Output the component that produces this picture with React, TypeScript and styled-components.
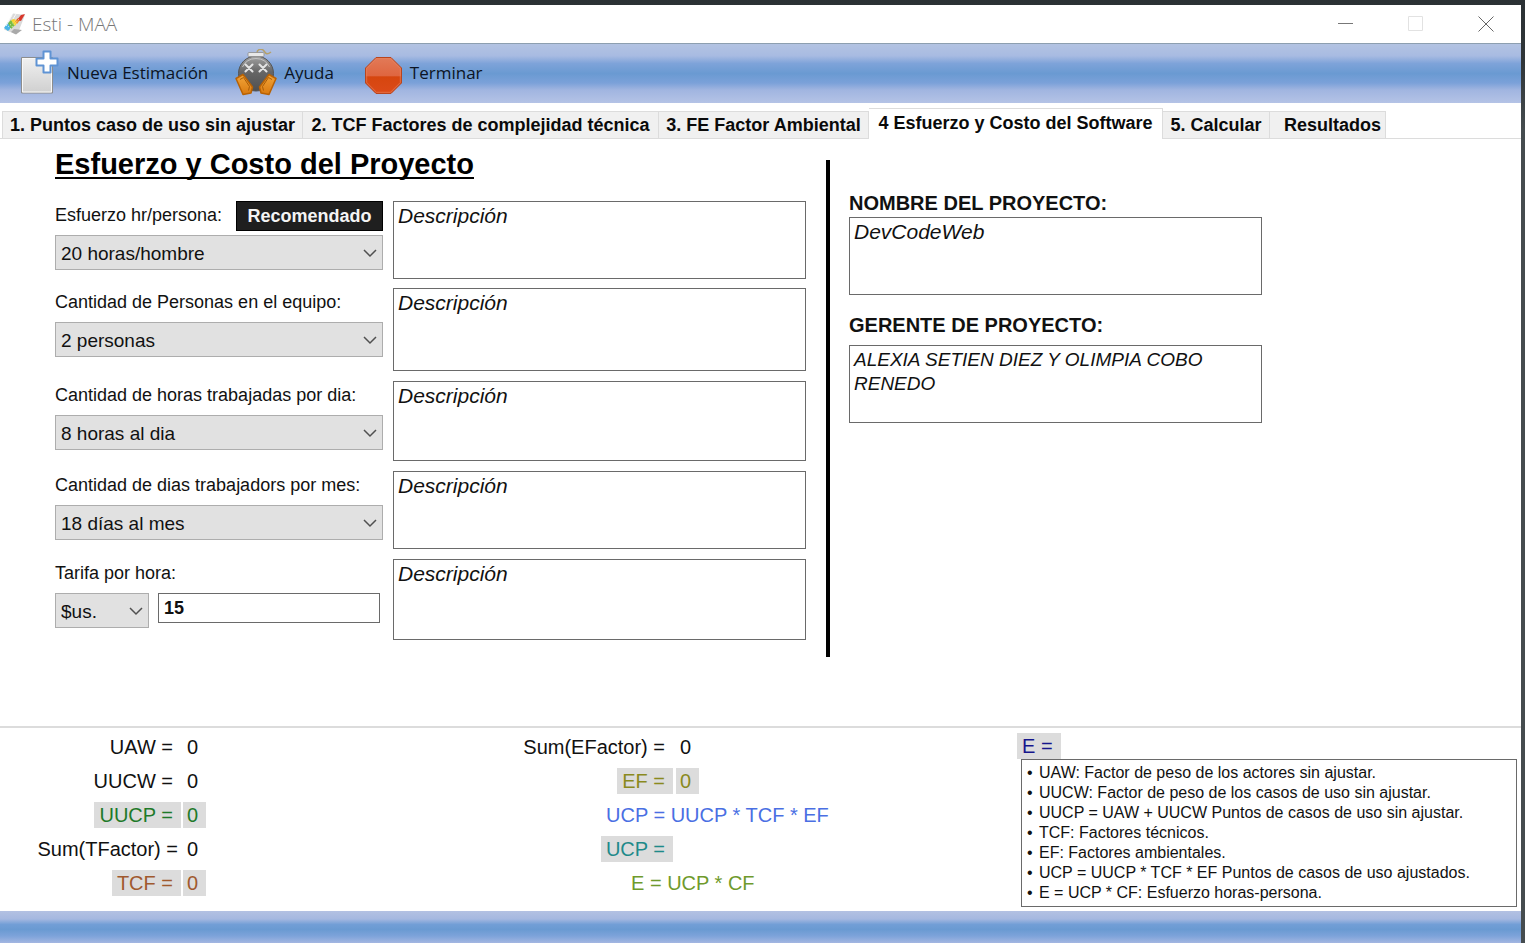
import React from "react";
import styled, { createGlobalStyle, css } from "styled-components";

const sans = `"Liberation Sans", Arial, sans-serif`;
const uiSans = `"Open Sans", "Noto Sans", sans-serif`;

const GlobalStyle = createGlobalStyle`
  *, *::before, *::after { box-sizing: border-box; }
  body { margin: 0; background: #2d3336; font-family: ${sans}; color: #111; }
  button, input, select, textarea { font-family: inherit; color: inherit; margin: 0; border-radius: 0; }
`;

const Desktop = styled.div`
  min-height: 100vh;
  display: flex;
  padding: 5px 4px 0 0;
  background: linear-gradient(#2b3134, #2f3538 60px, #454c4f 130px, #454c4f);
`;

const Window = styled.div`
  flex: 1;
  min-width: 0;
  display: flex;
  flex-direction: column;
  background: #fff;
`;

const TitleBar = styled.header`
  display: flex;
  align-items: center;
  height: 39px;
  padding-left: 3px;
  border-bottom: 1px solid #8d9fb0;
`;

const Title = styled.h1`
  flex: 1;
  margin: 0 0 0 5px;
  font: 300 19px/24px ${uiSans};
  color: #777;
`;

const WindowButton = styled.button`
  display: grid;
  place-items: center;
  width: 70px;
  height: 38px;
  padding: 0;
  border: 0;
  background: none;
`;

const Toolbar = styled.nav`
  display: flex;
  align-items: center;
  gap: 27px;
  height: 59px;
  padding: 0 0 1px 18px;
  background: linear-gradient(#b3c3e2, #a8bbe2 20%, #7ea3d9 33%, #6a9ad2 50%, #7ba1d9 66%, #a1b5e0 78%, #b4c3e6);
`;

const ToolButton = styled.button`
  display: flex;
  align-items: center;
  gap: 7px;
  padding: 0;
  border: 0;
  background: none;
  font: 17px/24px ${uiSans};
  color: #0c1424;
`;

const TabStrip = styled.div`
  display: flex;
  align-items: flex-end;
  height: 36px;
  padding-left: 2px;
  border-bottom: 1px solid #dcdcdc;
`;

const Tab = styled.button<{ $width: number; $active?: boolean; $inset?: number }>`
  width: ${(p) => p.$width}px;
  height: 27px;
  padding: 0 0 0 ${(p) => p.$inset ?? 0}px;
  border: 1px solid #dcdcdc;
  border-left-width: 0;
  border-bottom: 0;
  background: #f0f0f0;
  font-size: 18px;
  font-weight: 700;
  line-height: 24px;
  white-space: nowrap;
  color: #0a0a0a;
  &:first-child { border-left-width: 1px; }
  ${(p) =>
    p.$active &&
    css`
      height: 31px;
      margin-bottom: -1px;
      padding-bottom: 3px;
      background: #fff;
    `}
`;

const Page = styled.main`
  flex: 1;
  display: grid;
  grid-template-columns: minmax(0, 751fr) 4px minmax(0, 691fr);
  align-content: start;
  padding: 10px 0 20px 55px;
`;

const FormSection = styled.section`
  padding-bottom: 17px;
`;

const Heading = styled.h2`
  margin: 0 0 22px;
  font-size: 29px;
  line-height: 30px;
  color: #000;
  text-decoration: underline;
  text-decoration-thickness: 2px;
  text-underline-offset: 3px;
  text-decoration-skip-ink: none;
`;

const FormGrid = styled.div`
  display: grid;
  grid-template-columns: minmax(0, 328fr) minmax(0, 413fr);
  grid-template-rows: 77px 83px 80px 78px 81px;
  gap: 10px;
`;

const Field = styled.div`
  min-width: 0;
`;

const FieldHead = styled.div`
  display: flex;
  justify-content: space-between;
  height: 34px;
`;

const Label = styled.label`
  font-size: 18px;
  line-height: 28px;
  white-space: nowrap;
`;

const RecommendButton = styled.button`
  width: 147px;
  height: 30px;
  padding: 0;
  border: 1px solid #000;
  background: #1f1f1f;
  color: #f4f4f4;
  font-size: 18px;
  font-weight: 700;
`;

const SelectBox = styled.div<{ $width?: number }>`
  position: relative;
  width: ${(p) => (p.$width ? `${p.$width}px` : "100%")};
  svg {
    position: absolute;
    right: 6px;
    top: 14px;
    pointer-events: none;
  }
`;

const Select = styled.select`
  display: block;
  width: 100%;
  height: 35px;
  padding: 2px 20px 0 5px;
  border: 1px solid #adadad;
  background: #e1e1e1;
  appearance: none;
  font-size: 19px;
`;

const RateRow = styled.div`
  display: flex;
  align-items: flex-start;
  gap: 9px;
  padding-right: 3px;
`;

const RateInput = styled.input`
  flex: 1;
  min-width: 0;
  height: 30px;
  padding: 0 5px;
  border: 1px solid #6a6a6a;
  background: #fff;
  font-size: 18px;
  font-weight: 700;
`;

const Notes = styled.textarea<{ $size?: number }>`
  display: block;
  width: 100%;
  height: 100%;
  min-height: 78px;
  padding: 2px 4px;
  border: 1px solid #6a6a6a;
  background: #fff;
  resize: none;
  overflow: hidden;
  font-size: ${(p) => p.$size ?? 21}px;
  font-style: italic;
  line-height: 24px;
`;

const Divider = styled.div`
  margin-top: 11px;
  background: #000;
`;

const ProjectSection = styled.section`
  display: grid;
  grid-template-columns: minmax(0, 413fr) minmax(0, 259fr);
  align-content: start;
  gap: 18px 0;
  padding: 42px 0 0 19px;
`;

const ProjectField = styled.div<{ $gap: number }>`
  grid-column: 1;
  display: flex;
  flex-direction: column;
  gap: ${(p) => p.$gap}px;
`;

const ProjectLabel = styled.label`
  font-size: 20px;
  font-weight: 700;
  line-height: 24px;
  white-space: nowrap;
`;

const Summary = styled.footer`
  display: grid;
  grid-template-columns: minmax(0, 515fr) minmax(0, 502fr) minmax(0, 500fr);
  padding-right: 4px;
  border-top: 2px solid #dcdcdc;
  background: #fff;
  font-size: 20px;
`;

const Totals = styled.div<{ $label: number; $gap: number }>`
  display: grid;
  grid-template-columns: ${(p) => p.$label}px auto;
  grid-template-rows: repeat(5, 34px);
  column-gap: ${(p) => p.$gap}px;
  align-items: center;
  justify-content: start;
  padding: 2px 0 11px;
`;

const Tag = styled.span<{ $tone?: string; $tight?: boolean }>`
  justify-self: end;
  padding: 0 ${(p) => (p.$tight ? 3 : 8)}px 0 5px;
  line-height: 26px;
  white-space: nowrap;
  color: ${(p) => p.$tone ?? "#111"};
  background: ${(p) => (p.$tone ? "#dcdcdc" : "none")};
`;

const Amount = styled.output<{ $tone?: string }>`
  justify-self: start;
  padding: 0 8px 0 4px;
  line-height: 26px;
  color: ${(p) => p.$tone ?? "#111"};
  background: ${(p) => (p.$tone ? "#dcdcdc" : "none")};
`;

const Formula = styled.span<{ $tone: string; $indent: number }>`
  grid-column: 1 / -1;
  padding-left: ${(p) => p.$indent}px;
  line-height: 26px;
  white-space: nowrap;
  color: ${(p) => p.$tone};
`;

const Effort = styled.div`
  display: flex;
  flex-direction: column;
  align-items: flex-start;
  padding: 5px 0 4px;
`;

const Legend = styled.ul`
  align-self: stretch;
  margin: 0 0 0 4px;
  padding: 3px 5px 3px;
  border: 1px solid #6a6a6a;
  list-style: none;
  font-size: 16px;
  line-height: 20px;
`;

const LegendItem = styled.li`
  display: flex;
  white-space: nowrap;
  &::before {
    content: "•";
    width: 12px;
    flex: none;
  }
`;

const StatusBar = styled.div`
  height: 32px;
  background: linear-gradient(#b3c1e2, #a5b8e0 25%, #729ed6 42%, #6a9ad2 58%, #7da3da 78%, #a3b6e1);
`;

const AppIcon = () => (
  <svg width="24" height="24" viewBox="0 0 24 24" aria-hidden="true">
    <path d="M10 1.500 22 3 15.500 19.500 12 22 1 17.500Z" fill="#dadada" />
    <path d="M11 17 19 18 13 22.500 8 20Z" fill="#a9a9a9" />
    <path d="M1 16 5 10 9 15 5 19Z" fill="#49b4e6" />
    <path d="M5 11 8 8 12 13 8 17Z" fill="#78bd45" />
    <path d="M8 8 11 7 15 9 12 14Z" fill="#f5d32c" />
    <path d="M12 9 15 6 17 8 14 12Z" fill="#f0912c" />
    <path d="m14 8 4-5 4-1-4 7Z" fill="#d8372a" />
    <path d="m9 3-6 11M13 2l-3 5" stroke="#f7f7f7" fill="none" />
    <path d="m5 15 9-8M7 17l9-10" stroke="#fff" strokeWidth="0.8" strokeDasharray="1 2" />
  </svg>
);

const NewIcon = () => (
  <svg width="42" height="48" viewBox="0 0 42 48" aria-hidden="true">
    <defs>
      <linearGradient id="paper" x1="0" y1="0" x2="0" y2="1">
        <stop offset="0" stopColor="#f1f1f1" />
        <stop offset="1" stopColor="#cfcfcf" />
      </linearGradient>
    </defs>
    <path d="M3.500 8.500h31v35.500h-31z" fill="url(#paper)" stroke="#8d8d8d" />
    <path d="M4.500 9.500h29v33.500h-29z" fill="none" stroke="#f8f8f8" />
    <path
      d="M25.500 2.500h7v7h7v7h-7v7h-7v-7h-7v-7h7z"
      fill="#fff"
      stroke="#5f93d4"
      strokeWidth="2"
      strokeLinejoin="round"
    />
  </svg>
);

const BombIcon = () => (
  <svg width="42" height="48" viewBox="0 0 42 48" aria-hidden="true">
    <defs>
      <linearGradient id="bomb" x1="0" y1="0" x2="0" y2="1">
        <stop offset="0" stopColor="#a3a3a3" />
        <stop offset="0.450" stopColor="#666" />
        <stop offset="1" stopColor="#505050" />
      </linearGradient>
      <linearGradient id="shoe" x1="0" y1="0" x2="0" y2="1">
        <stop offset="0" stopColor="#f3a63a" />
        <stop offset="1" stopColor="#d97a10" />
      </linearGradient>
    </defs>
    <path d="M22 4c0-4 5-5 7-2s3 4 7 1" fill="none" stroke="#b5a06a" strokeWidth="1.500" />
    <circle cx="21" cy="24.500" r="17.500" fill="url(#bomb)" stroke="#555" />
    <path d="M7.500 18a15 15 0 0 1 27 0" fill="none" stroke="#c4c4c4" strokeWidth="1" />
    <rect x="13" y="3.500" width="16" height="4" rx="1" fill="#e8e8e8" stroke="#8c8c8c" strokeWidth="0.800" />
    <path d="m10.500 15.500 7 7m0-7-7 7m14-7 7 7m0-7-7 7" stroke="#e4e4e4" strokeWidth="2" strokeLinecap="round" />
    <path d="M1 29.500 8 25.500 17.500 38 16 44 8 45.500Z" fill="url(#shoe)" stroke="#b86204" strokeWidth="1.500" strokeLinejoin="round" />
    <path d="M41 29.500 34 25.500 24.500 38 26 44 34 45.500Z" fill="url(#shoe)" stroke="#b86204" strokeWidth="1.500" strokeLinejoin="round" />
    <path d="M5 30.500 8.500 28.500 14.500 37.500 13.500 41.500M37 30.500 33.500 28.500 27.500 37.500 28.500 41.500" fill="none" stroke="#a85c08" />
  </svg>
);

const StopIcon = () => (
  <svg width="42" height="48" viewBox="0 0 42 48" aria-hidden="true">
    <defs>
      <linearGradient id="stop" x1="0" y1="0" x2="0" y2="1">
        <stop offset="0" stopColor="#e27a58" />
        <stop offset="0.500" stopColor="#df6640" />
        <stop offset="0.540" stopColor="#d6460f" />
        <stop offset="1" stopColor="#dc4a18" />
      </linearGradient>
    </defs>
    <path d="M15 8.500h15l10.500 10.500v15L30 44.500H15L4.500 34V19z" fill="url(#stop)" stroke="#b8451e" strokeLinejoin="round" />
    <path d="M15.500 9.700h14l9.800 9.800v14l-9.800 9.800h-14l-9.800-9.800v-14z" fill="none" stroke="#ea8661" strokeWidth="0.600" />
  </svg>
);

const Chevron = () => (
  <svg width="14" height="9" viewBox="0 0 14 9" aria-hidden="true">
    <path d="m1 1 6 6 6-6" fill="none" stroke="#505050" strokeWidth="1.500" />
  </svg>
);

const tabs = [
  { text: "1. Puntos caso de uso sin ajustar", width: 301 },
  { text: "2. TCF Factores de complejidad técnica", width: 356 },
  { text: "3. FE Factor Ambiental", width: 210 },
  { text: "4 Esfuerzo y Costo del Software", width: 294, active: true },
  { text: "5. Calcular", width: 107 },
  { text: "Resultados", width: 116, inset: 10 },
];

const legend = [
  "UAW: Factor de peso de los actores sin ajustar.",
  "UUCW: Factor de peso de los casos de uso sin ajustar.",
  "UUCP = UAW + UUCW Puntos de casos de uso sin ajustar.",
  "TCF: Factores técnicos.",
  "EF: Factores ambientales.",
  "UCP = UUCP * TCF * EF Puntos de casos de uso ajustados.",
  "E = UCP * CF: Esfuerzo horas-persona.",
];

const choices = [
  { id: "esfuerzo", label: "Esfuerzo hr/persona:", value: "20 horas/hombre", recommend: true },
  { id: "personas", label: "Cantidad de Personas en el equipo:", value: "2 personas" },
  { id: "horas", label: "Cantidad de horas trabajadas por dia:", value: "8 horas al dia" },
  { id: "dias", label: "Cantidad de dias trabajadors por mes:", value: "18 días al mes" },
];

const Columns = styled(Page)`
  grid-template-columns: minmax(0, 751fr) 20px 4px minmax(0, 691fr);
  ${FormSection} { grid-column: 1; }
  ${Divider} { grid-column: 3; }
  ${ProjectSection} { grid-column: 4; }
`;

export default function App() {
  return (
    <>
      <GlobalStyle />
      <Desktop>
        <Window>
          <TitleBar>
            <AppIcon />
            <Title>Esti - MAA</Title>
            <WindowButton aria-label="Minimizar">
              <svg width="16" height="16" viewBox="0 0 16 16">
                <path d="M0 7.500h15" stroke="#777" />
              </svg>
            </WindowButton>
            <WindowButton aria-label="Maximizar" disabled>
              <svg width="16" height="16" viewBox="0 0 16 16">
                <path d="M.5 .5h14v14H.5z" stroke="#e2e2e2" fill="none" />
              </svg>
            </WindowButton>
            <WindowButton aria-label="Cerrar">
              <svg width="16" height="16" viewBox="0 0 16 16">
                <path d="m.5 .5 15 15m0-15-15 15" stroke="#666" />
              </svg>
            </WindowButton>
          </TitleBar>

          <Toolbar>
            <ToolButton><NewIcon />Nueva Estimación</ToolButton>
            <ToolButton><BombIcon />Ayuda</ToolButton>
            <ToolButton><StopIcon />Terminar</ToolButton>
          </Toolbar>

          <TabStrip role="tablist">
            {tabs.map((t) => (
              <Tab key={t.text} role="tab" aria-selected={!!t.active} $width={t.width} $active={t.active} $inset={t.inset}>
                {t.text}
              </Tab>
            ))}
          </TabStrip>

          <Columns>
            <FormSection>
              <Heading>Esfuerzo y Costo del Proyecto</Heading>
              <FormGrid>
                {choices.map((c) => (
                  <React.Fragment key={c.id}>
                    <Field>
                      <FieldHead>
                        <Label htmlFor={c.id}>{c.label}</Label>
                        {c.recommend && <RecommendButton>Recomendado</RecommendButton>}
                      </FieldHead>
                      <SelectBox>
                        <Select id={c.id} defaultValue={c.value}>
                          <option>{c.value}</option>
                        </Select>
                        <Chevron />
                      </SelectBox>
                    </Field>
                    <Notes aria-label={`Descripción, ${c.label}`} defaultValue="Descripción" />
                  </React.Fragment>
                ))}
                <Field>
                  <FieldHead>
                    <Label htmlFor="tarifa">Tarifa por hora:</Label>
                  </FieldHead>
                  <RateRow>
                    <SelectBox $width={94}>
                      <Select aria-label="Moneda" defaultValue="$us.">
                        <option>$us.</option>
                      </Select>
                      <Chevron />
                    </SelectBox>
                    <RateInput id="tarifa" defaultValue="15" />
                  </RateRow>
                </Field>
                <Notes aria-label="Descripción, Tarifa por hora" defaultValue="Descripción" />
              </FormGrid>
            </FormSection>

            <Divider />

            <ProjectSection>
              <ProjectField $gap={2}>
                <ProjectLabel htmlFor="proyecto">NOMBRE DEL PROYECTO:</ProjectLabel>
                <Notes id="proyecto" defaultValue="DevCodeWeb" spellCheck={false} />
              </ProjectField>
              <ProjectField $gap={8}>
                <ProjectLabel htmlFor="gerente">GERENTE DE PROYECTO:</ProjectLabel>
                <Notes
                  id="gerente"
                  $size={19}
                  defaultValue="ALEXIA SETIEN DIEZ Y OLIMPIA COBO RENEDO"
                  spellCheck={false}
                />
              </ProjectField>
            </ProjectSection>
          </Columns>

          <Summary>
            <Totals $label={181} $gap={2}>
              <Tag>UAW =</Tag>
              <Amount>0</Amount>
              <Tag>UUCW =</Tag>
              <Amount>0</Amount>
              <Tag $tone="#1f7a2a">UUCP =</Tag>
              <Amount $tone="#1f7a2a">0</Amount>
              <Tag $tight>Sum(TFactor) =</Tag>
              <Amount>0</Amount>
              <Tag $tone="#a0592e">TCF =</Tag>
              <Amount $tone="#a0592e">0</Amount>
            </Totals>
            <Totals $label={158} $gap={3}>
              <Tag>Sum(EFactor) =</Tag>
              <Amount>0</Amount>
              <Tag $tone="#8a8a1e">EF =</Tag>
              <Amount $tone="#8a8a1e">0</Amount>
              <Formula $tone="#4a6fe3" $indent={91}>UCP = UUCP * TCF * EF</Formula>
              <Tag $tone="#1f8a8a">UCP =</Tag>
              <span />
              <Formula $tone="#6f9a2c" $indent={116}>E = UCP * CF</Formula>
            </Totals>
            <Effort>
              <Tag $tone="#16168c">E =</Tag>
              <Legend>
                {legend.map((item) => (
                  <LegendItem key={item}>{item}</LegendItem>
                ))}
              </Legend>
            </Effort>
          </Summary>
          <StatusBar />
        </Window>
      </Desktop>
    </>
  );
}
